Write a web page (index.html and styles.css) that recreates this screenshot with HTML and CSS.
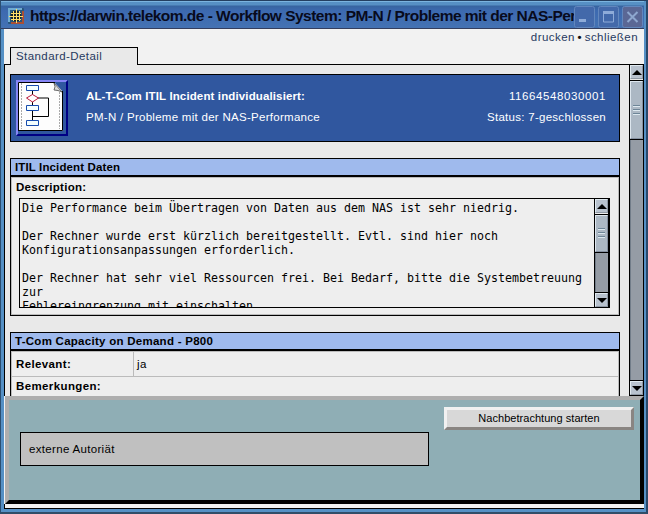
FILE: index.html
```html
<!DOCTYPE html>
<html lang="de">
<head>
<meta charset="utf-8">
<title>Workflow System</title>
<link rel="stylesheet" href="styles.css">
</head>
<body>
<div class="window">
  <header class="titlebar">
    <svg class="app-icon" width="16" height="16" viewBox="0 0 16 16">
      <rect width="16" height="16" rx="1" fill="#28577c"/>
      <path d="M1 14V1h13" fill="none" stroke="#70acd2" stroke-width="2"/>
      <path d="M15 3v12H3" fill="none" stroke="#a94f35" stroke-width="2"/>
      <circle cx="8" cy="8" r="5.500" fill="#17232b"/>
      <path d="M5.500 3v10M8.500 1v14M11.500 3v10M3 5.500h10M1 8.500h14M3 11.500h10" stroke="#ffe06a"/>
    </svg>
    <div class="title">https://darwin.telekom.de - Workflow System: PM-N / Probleme mit der NAS-Performance</div>
    <div class="controls">
      <svg width="21" height="22" viewBox="0 0 21 22"><rect class="ctl" x=".5" y=".5" width="20" height="21" rx="2"/><path d="M5 14.500h7" stroke="#8eabd8" stroke-width="3"/></svg>
      <svg width="21" height="22" viewBox="0 0 21 22"><rect class="ctl" x=".5" y=".5" width="20" height="21" rx="2"/><path d="M5.500 7v9h10v-9" fill="none" stroke="#8eabd8"/><path d="M5 6.500h11" stroke="#8eabd8" stroke-width="3"/></svg>
      <svg width="21" height="22" viewBox="0 0 21 22"><rect class="ctl close" x=".5" y=".5" width="20" height="21" rx="2"/><path d="M5.500 6l10 10M15.500 6l-10 10" stroke="#8ea7cf" stroke-width="2"/></svg>
    </div>
  </header>
  <main class="client">
    <nav class="topnav">
      <div class="links"><a>drucken</a> <b>•</b> <a>schließen</a></div>
      <div class="tabs"><span class="lead"></span><div class="tab">Standard-Detail</div><span class="rest"></span></div>
    </nav>
    <div class="viewport">
      <div class="page">
        <section class="summary">
          <svg class="doc-icon" width="52" height="56" viewBox="0 0 52 56">
            <path d="M0 56V0h52l-2 2H2v52z" fill="#8585f5"/>
            <path d="M52 0v56H0l2-2h48V2z" fill="#000085"/>
            <path d="M2 2h36l9 10v39H2z" fill="#fdfdfd"/>
            <path d="M2.500 51V2.500H39M3 50.500h43.500V11" fill="none" stroke="#000"/>
            <path d="M5.500 3v46M43.500 12v37" stroke="#aaa" stroke-dasharray="2 1"/>
            <path d="M38 3q2 4 0 7 4 0 8 2z" fill="#ddd" stroke="#444" stroke-width=".8"/>
            <path d="M16.500 11v33M22 18h10.500v18.500h-16" fill="none" stroke="#000"/>
            <g fill="#f4ffff" stroke="#174bad"><path d="M10.500 5.500h12v5h-12zM10.500 25.500h12v5h-12zM10.500 40.500h12v5h-12z"/></g>
            <path d="M16.500 14.500l6 3.500-6 4-6-4z" fill="#fff" stroke="#b9193c"/>
          </svg>
          <div class="summary-text">
            <div class="line"><strong class="t-name">AL-T-Com ITIL Incident individualisiert:</strong><span class="t-num">11664548030001</span></div>
            <div class="line"><span class="t-sub">PM-N / Probleme mit der NAS-Performance</span><span class="t-status">Status: 7-geschlossen</span></div>
          </div>
        </section>
        <section class="card incident">
          <h2 class="h-itil">ITIL Incident Daten</h2>
          <div class="body">
            <label>Description:</label>
            <div class="memo">
              <pre>Die Performance beim Übertragen von Daten aus dem NAS ist sehr niedrig.

Der Rechner wurde erst kürzlich bereitgestellt. Evtl. sind hier noch
Konfigurationsanpassungen erforderlich.

Der Rechner hat sehr viel Ressourcen frei. Bei Bedarf, bitte die Systembetreuung
zur
Fehlereingrenzung mit einschalten.</pre>
              <div class="scroll"><i class="btn up"></i><i class="thumb"></i><i class="track"></i><i class="btn down"></i></div>
            </div>
          </div>
        </section>
        <section class="card capacity">
          <h2 class="h-cap">T-Com Capacity on Demand - P800</h2>
          <div class="body">
            <div class="row"><div class="key">Relevant:</div><div class="val">ja</div></div>
            <div class="note">Bemerkungen:</div>
          </div>
        </section>
      </div>
      <div class="scroll main-scroll"><i class="btn up"></i><i class="thumb"></i><i class="track"></i><i class="btn down"></i></div>
    </div>
    <footer class="actions">
      <div class="field">externe Autoriät</div>
      <button>Nachbetrachtung starten</button>
    </footer>
  </main>
</div>
</body>
</html>
```
FILE: styles.css
```css
* { box-sizing: border-box; }
body {
  margin: 0;
  width: 648px;
  height: 514px;
  overflow: hidden;
  background: #2e4d6d;
  font: 11.5px/14px "Liberation Sans", Arial, sans-serif;
  color: #000;
}
.window {
  height: 514px;
  display: flex;
  flex-direction: column;
  border: solid;
  border-width: 1px 2px 2px 1px;
  border-color: #243f60 #294869 #314d68 #2b4e71;
  background: #5590c5;
  padding: 0 2px 3px 3px;
}
.titlebar {
  height: 28px;
  flex: none;
  display: flex;
  align-items: flex-start;
  padding: 4px 1px 0 4px;
  margin-left: -3px;
  border-bottom: 1px solid #343e5e;
  background: linear-gradient(#7bb4df 0 1px, #5790c4 1px 4px, #3764a0 5px, #3d6ab0 10px, #4472b3);
}
.app-icon { margin-top: 3px; margin-left: 3px; flex: none; }
.title {
  flex: 1;
  width: 0;
  margin-left: 6px;
  overflow: hidden;
  white-space: nowrap;
  font: bold 15.5px/21px "Liberation Sans", Arial, sans-serif;
  letter-spacing: -.52px;
  color: #080a1c;
}
.controls { display: flex; gap: 3px; margin-top: 1px; }
.controls svg { display: block; }
.ctl { fill: #4369aa; stroke: #6287bd; }
.close { fill: #5a6795; }
.client { flex: 1; display: flex; flex-direction: column; min-height: 0; background: #f2f2f2; }
.topnav { height: 36px; flex: none; display: flex; flex-direction: column; justify-content: space-between; color: #27395f; }
.links { text-align: right; padding: 1px 6px 0 0; letter-spacing: .45px; word-spacing: -1px; height: 16px; }
.links b { color: #111; }
.tabs { display: flex; align-items: flex-end; height: 18px; }
.lead { width: 6px; border-bottom: 1px solid #000; }
.rest { flex: 1; border-bottom: 1px solid #000; }
.tab { width: 128px; height: 18px; border: 1px solid #000; border-bottom: 0; background: #e9e9e9; padding: 1px 5px; letter-spacing: .42px; }
.viewport { height: 331px; flex: none; display: flex; background: #e9e9e9; border-left: 1px solid #000; overflow: hidden; }
.page { flex: 1; padding: 9px 9px 0 5px; display: flex; flex-direction: column; gap: 16px; }
.summary { height: 68px; flex: none; border: 1px solid #000; background: #30579f; color: #fff; display: flex; padding: 5px 13px 0 5px; }
.doc-icon { flex: none; }
.summary-text { flex: 1; padding: 8px 0 0 18px; }
.line { height: 21px; line-height: 14px; padding-top: 1px; display: flex; justify-content: space-between; white-space: nowrap; }
.t-name { letter-spacing: .13px; }
.t-sub { letter-spacing: .28px; }
.t-num { letter-spacing: .6px; }
.t-status { letter-spacing: .28px; }
.card { flex: none; border: 1px solid #000; background: #eee; }
.incident { height: 158px; display: flex; flex-direction: column; }
.capacity { height: 100px; }
h2 { flex: none; margin: 0; height: 18px; padding: 1px 4px 0; font-size: 11.5px; line-height: 15px; border-bottom: 2px solid #000; background: #9fbaed; }
.h-itil { letter-spacing: .13px; }
.h-cap { letter-spacing: .27px; }
.body { flex: 1; border: 1px solid #bbb; }
.incident .body { padding: 2px 8px 0 7px; }
label { display: block; height: 18px; margin-left: -3px; font-weight: bold; line-height: 15px; letter-spacing: .27px; }
.memo { height: 110px; border: 1px solid #000; border-right-width: 2px; display: flex; overflow: hidden; }
pre { flex: 1; margin: 0; padding: 2px 2px 0; font: 11.63px/14px "DejaVu Sans Mono", monospace; overflow: hidden; }
.scroll { width: 14px; border-left: 1px solid #000; display: flex; flex-direction: column; flex: none; }
.btn { height: 14px; background: #b8c2ce; border: 1px solid; border-color: #e0eaf0 #8e98a4 #8e98a4 #e0eaf0; display: flex; align-items: center; justify-content: center; }
.btn::after { content: ""; border: 5px solid transparent; border-top-width: 0; border-bottom: 5px solid #000; }
.down::after { border-top: 5px solid #000; border-bottom-width: 0; }
.thumb { height: 37px; border: 1px solid; border-color: #dde6ee #8590a0 #8590a0 #dde6ee; background: #acb8c4; box-shadow: 0 -1px #000, 0 1px #000; margin: 2px 0 1px; display: flex; align-items: center; justify-content: center; }
.thumb::before { content: ""; width: 7px; height: 11px; background: repeating-linear-gradient(#6d8597 0 1px, #dce8ef 1px 2px, transparent 2px 4px); }
.track { flex: 1; background: #959ca5; border-left: 1px solid #727d89; }
.down { box-shadow: 0 -1px #000; }
.main-scroll { width: 15px; border-right: 1px solid #000; border-bottom: 1px solid #000; }
.main-scroll .thumb { height: 58px; }
.row { height: 25px; display: flex; border-bottom: 1px solid #bbb; line-height: 24px; }
.key { width: 122px; padding-left: 4px; border-right: 1px solid #bbb; font-weight: bold; letter-spacing: .38px; }
.val { padding-left: 3px; letter-spacing: .4px; }
.note { font-weight: bold; padding-left: 4px; line-height: 19px; letter-spacing: .38px; }
.actions { height: 108px; flex: none; margin-left: 1px; background: #8faeb5; border: 4px solid; border-color: #aeaeae #000 #000 #aeaeae; display: flex; justify-content: space-between; align-items: flex-start; padding: 7px 6px 0 11px; }
.field { margin-top: 25px; width: 409px; height: 34px; border: 1px solid #000; background: #c0c0c0; padding: 0 8px; line-height: 33px; letter-spacing: .32px; }
button { width: 190px; height: 23px; padding: 0; border: 3px solid; border-color: #f1f1f1 #898582 #898582 #f1f1f1; background: #d8d8d8; font: 11px/15px "Liberation Sans", Arial, sans-serif; letter-spacing: .04px; color: #000; }
.client::after { content: ""; flex: 1; border-bottom: 1px solid #000; border-left: 1px solid #000; }
```
